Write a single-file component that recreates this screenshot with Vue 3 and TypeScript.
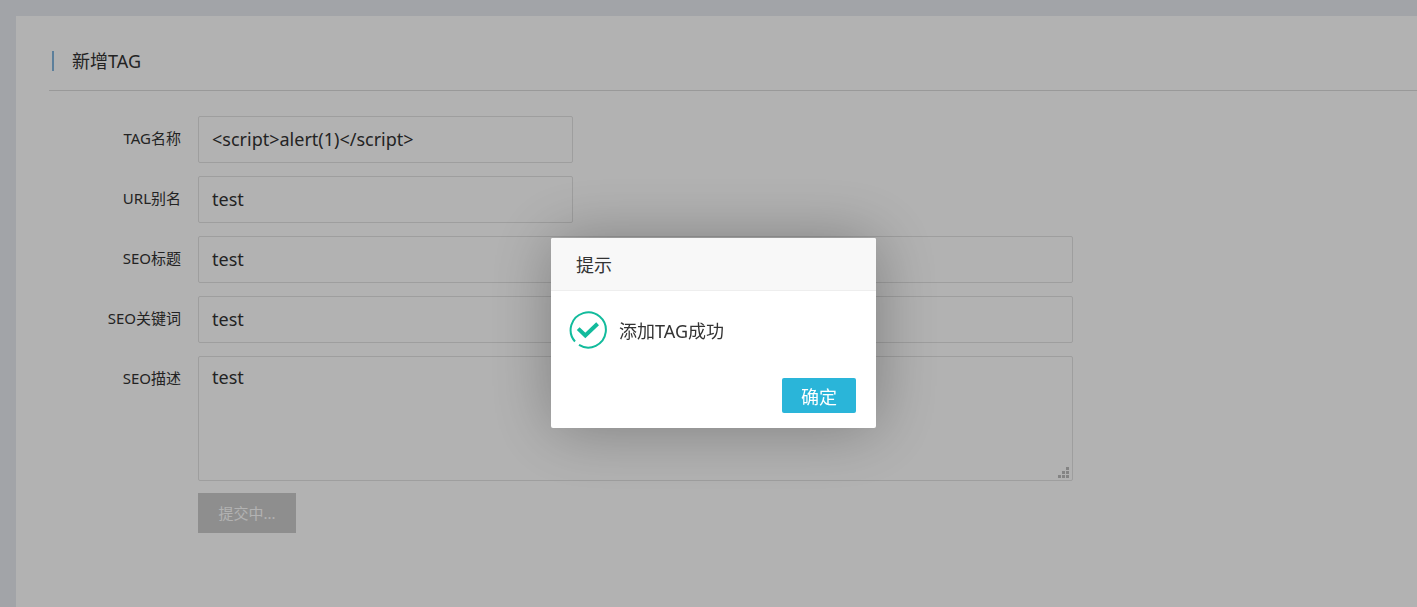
<script setup lang="ts">
import { ref } from 'vue'

interface Field {
  id: string
  label: string
  value: string
  kind: 'short' | 'long' | 'area'
}

const fields = ref<Field[]>([
  { id: 'tag-name', label: 'TAG名称', value: '<script>alert(1)<\/script>', kind: 'short' },
  { id: 'url-alias', label: 'URL别名', value: 'test', kind: 'short' },
  { id: 'seo-title', label: 'SEO标题', value: 'test', kind: 'long' },
  { id: 'seo-keywords', label: 'SEO关键词', value: 'test', kind: 'long' },
  { id: 'seo-desc', label: 'SEO描述', value: 'test', kind: 'area' },
])
const dialogOpen = ref(true)
</script>

<template>
  <div class="page">
    <main class="card">
      <header class="card-head">
        <h1>新增TAG</h1>
      </header>
      <form class="form" @submit.prevent>
        <div v-for="f in fields" :key="f.id" class="row">
          <label :for="f.id">{{ f.label }}</label>
          <div v-if="f.kind === 'area'" class="area">
            <textarea :id="f.id" v-model="f.value"></textarea>
            <svg class="grip" viewBox="0 0 11 11" aria-hidden="true">
              <path d="M8 0h3v3h-3zM4 4h3v3h-3zM8 4h3v3h-3zM0 8h3v3h-3zM4 8h3v3h-3zM8 8h3v3h-3z" />
            </svg>
          </div>
          <input v-else :id="f.id" v-model="f.value" type="text" spellcheck="false" :class="f.kind" />
        </div>
        <div class="row">
          <button class="submit" type="submit" disabled>提交中...</button>
        </div>
      </form>
    </main>

    <div v-if="dialogOpen" class="shade">
      <section class="dialog" role="dialog" aria-modal="true" aria-labelledby="dialog-title">
        <h2 id="dialog-title">提示</h2>
        <div class="message">
          <svg class="ok" viewBox="0 0 38 38" aria-hidden="true">
            <path class="ring" d="M6 30.5A17.6 17.6 0 1 1 10 33.9" />
            <path class="tick" d="M9.2 17.6L16.3 24.4L28.6 12.8" />
          </svg>
          <p>添加TAG成功</p>
        </div>
        <div class="actions">
          <button class="confirm" type="button" @click="dialogOpen = false">确定</button>
        </div>
      </section>
    </div>
  </div>
</template>

<style>
body {
  background: #e9ebf1;
}
</style>

<style scoped>
.page,
.page * {
  box-sizing: border-box;
}
.page {
  display: flex;
  min-height: 100vh;
  padding: 16px 0 0 16px;
  background: #e9ebf1;
  color: #333;
  font-family: "Noto Sans", "Noto Sans CJK SC", sans-serif;
  font-size: 18px;
}
h1,
h2,
p {
  margin: 0;
  font-size: 18px;
  font-weight: 400;
}
input,
textarea,
button {
  font: inherit;
  color: inherit;
}
.card {
  flex: 1;
  min-width: 0;
  padding: 16px 0 32px 33px;
  background: #fff;
}
.card-head {
  display: flex;
  align-items: center;
  height: 59px;
  padding-left: 3px;
  border-bottom: 1px solid #dcdcdc;
}
.card-head h1 {
  padding-left: 18px;
  border-left: 2px solid #84b7de;
  line-height: 20px;
}
.form {
  display: flex;
  flex-direction: column;
  gap: 13px;
  padding-top: 25px;
}
.row {
  display: grid;
  grid-template-columns: 132px minmax(0, 875px);
  column-gap: 17px;
}
.row label {
  font-size: 15px;
  line-height: 44px;
  text-align: right;
}
input,
textarea {
  display: block;
  width: 100%;
  padding: 0 13px;
  border: 1px solid #e2e2e2;
  border-radius: 2px;
  background: #fff;
  outline: none;
}
input {
  height: 47px;
  padding-bottom: 2px;
}
input.short {
  max-width: 375px;
}
.area {
  position: relative;
}
textarea {
  height: 125px;
  padding-top: 8px;
  line-height: 24px;
  resize: none;
}
.grip {
  position: absolute;
  right: 4px;
  bottom: 3px;
  width: 11px;
  height: 11px;
  fill: #bdbdbd;
}
.submit {
  grid-column: 2;
  justify-self: start;
  width: 98px;
  height: 40px;
  margin-top: -1px;
  padding: 0 0 2px;
  border: 0;
  background: #ccc;
  color: #fff;
  font-size: 15px;
}
.shade {
  position: fixed;
  inset: 0;
  display: flex;
  align-items: center;
  justify-content: center;
  padding: 59px 0 0 10px;
  background: rgba(0, 0, 0, 0.3);
}
.dialog {
  width: 325px;
  border-radius: 2px;
  background: #fff;
  box-shadow: 1px 1px 64px rgba(0, 0, 0, 0.3);
}
.dialog h2 {
  height: 53px;
  padding: 0 25px;
  border-bottom: 1px solid #eee;
  border-radius: 2px 2px 0 0;
  background: #f8f8f8;
  line-height: 54px;
}
.message {
  display: flex;
  align-items: center;
  gap: 12px;
  padding: 20px 19px 0 18px;
}
.ok {
  width: 38px;
  height: 38px;
  fill: none;
  stroke: #12bb9c;
}
.ring {
  stroke-width: 2;
}
.tick {
  stroke-width: 4;
}
.actions {
  display: flex;
  justify-content: flex-end;
  padding: 29px 20px 15px;
}
.confirm {
  width: 74px;
  height: 35px;
  padding: 0;
  border: 0;
  border-radius: 2px;
  background: #2ab5d9;
  color: #fff;
}
</style>
